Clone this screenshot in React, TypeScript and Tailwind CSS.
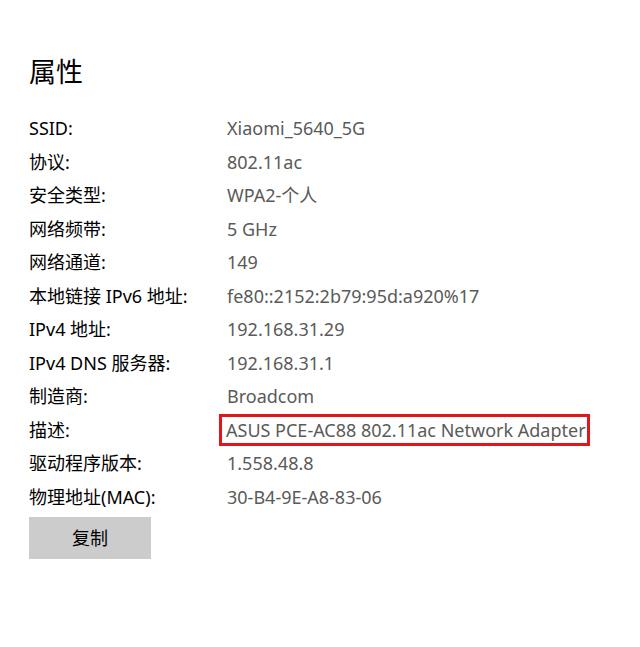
const rows: [string, string][] = [
  ['SSID:', 'Xiaomi_5640_5G'],
  ['协议:', '802.11ac'],
  ['安全类型:', 'WPA2-个人'],
  ['网络频带:', '5 GHz'],
  ['网络通道:', '149'],
  ['本地链接 IPv6 地址:', 'fe80::2152:2b79:95d:a920%17'],
  ['IPv4 地址:', '192.168.31.29'],
  ['IPv4 DNS 服务器:', '192.168.31.1'],
  ['制造商:', 'Broadcom'],
  ['描述:', 'ASUS PCE-AC88 802.11ac Network Adapter'],
  ['驱动程序版本:', '1.558.48.8'],
  ['物理地址(MAC):', '30-B4-9E-A8-83-06'],
];

export default function App() {
  return (
    <div className="w-[640px] h-[647px] bg-white pl-[29px] pt-[52px] font-['Noto_Sans','Noto_Sans_CJK_SC',sans-serif] text-black">
      <h1 className="text-[27px] leading-[40px] font-normal">属性</h1>

      <div className="mt-[20px] flex flex-col">
        {rows.map(([label, value]) => (
          <div key={label} className="flex h-[33.5px] items-center text-[18px]">
            <div className="w-[198px] shrink-0">{label}</div>
            {label === '描述:' ? (
              <div className="-ml-[8px] border-[3px] border-[#e0161b] pl-[4px] pr-[1px] leading-[26px] text-[#5a5a5a] whitespace-nowrap">
                {value}
              </div>
            ) : (
              <div className="text-[#5a5a5a]">{value}</div>
            )}
          </div>
        ))}
      </div>

      <button className="mt-[3px] h-[42px] w-[122px] bg-[#cccccc] text-[18px]">复制</button>
    </div>
  );
}
